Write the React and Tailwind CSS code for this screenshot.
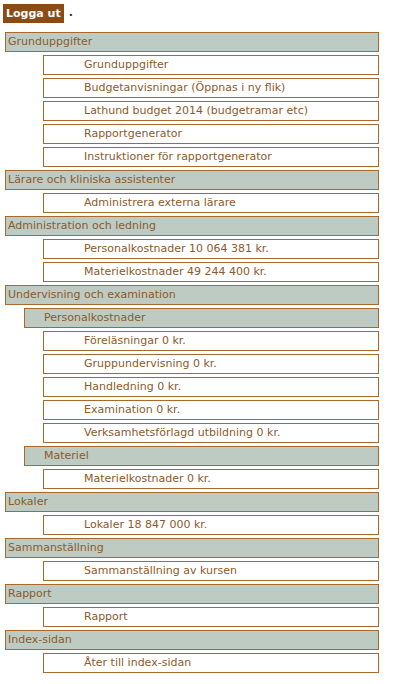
const sections = [
  {
    title: "Grunduppgifter",
    items: [
      "Grunduppgifter",
      "Budgetanvisningar (Öppnas i ny flik)",
      "Lathund budget 2014 (budgetramar etc)",
      "Rapportgenerator",
      "Instruktioner för rapportgenerator",
    ],
  },
  { title: "Lärare och kliniska assistenter", items: ["Administrera externa lärare"] },
  {
    title: "Administration och ledning",
    items: ["Personalkostnader 10 064 381 kr.", "Materielkostnader 49 244 400 kr."],
  },
  {
    title: "Undervisning och examination",
    groups: [
      {
        title: "Personalkostnader",
        items: [
          "Föreläsningar 0 kr.",
          "Gruppundervisning 0 kr.",
          "Handledning 0 kr.",
          "Examination 0 kr.",
          "Verksamhetsförlagd utbildning 0 kr.",
        ],
      },
      { title: "Materiel", items: ["Materielkostnader 0 kr."] },
    ],
  },
  { title: "Lokaler", items: ["Lokaler 18 847 000 kr."] },
  { title: "Sammanställning", items: ["Sammanställning av kursen"] },
  { title: "Rapport", items: ["Rapport"] },
  { title: "Index-sidan", items: ["Åter till index-sidan"] },
];

function Item({ label }) {
  return (
    <div className="ml-[38px] mb-[3px] h-[20px] border border-[#a8692e] bg-white pl-[40px] leading-[18px] text-[#8e5a2a]">
      {label}
    </div>
  );
}

export default function App() {
  return (
    <div className="min-h-[684px] bg-white px-[5px] pt-[4px] text-[11px] font-['DejaVu_Sans',Verdana,sans-serif]">
      <div className="-ml-[2px] mb-[9px] flex items-center gap-[5px]">
        <span className="bg-[#8b4b14] px-[3px] text-[11px] font-bold leading-[19px] text-white">Logga ut</span>
        <span className="font-bold text-[#333]">.</span>
      </div>
      <div className="w-[374px]">
        {sections.map((s) => (
          <div key={s.title}>
            <div className="mb-[3px] h-[20px] border border-[#a8692e] bg-[#bdcbc3] pl-[2px] leading-[18px] text-[#8e5a2a]">
              {s.title}
            </div>
            {s.items && s.items.map((i) => <Item key={i} label={i} />)}
            {s.groups &&
              s.groups.map((g) => (
                <div key={g.title}>
                  <div className="ml-[19px] mb-[3px] h-[20px] border border-[#a8692e] bg-[#bdcbc3] pl-[19px] leading-[18px] text-[#8e5a2a]">
                    {g.title}
                  </div>
                  {g.items.map((i) => <Item key={i} label={i} />)}
                </div>
              ))}
          </div>
        ))}
      </div>
    </div>
  );
}
